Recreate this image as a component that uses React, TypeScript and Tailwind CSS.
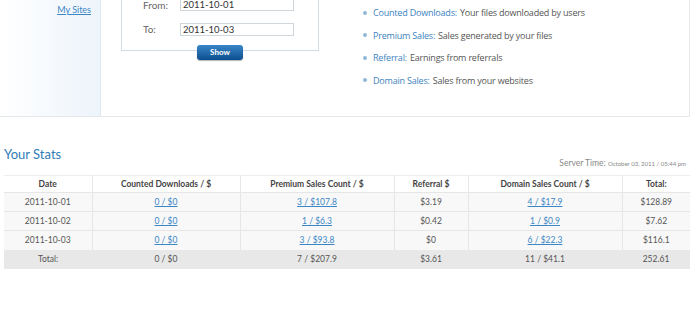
import React from 'react';

interface StatRow {
  date: string;
  downloads: string;
  premium: string;
  referral: string;
  domain: string;
  total: string;
}

const rows: StatRow[] = [
  { date: '2011-10-01', downloads: '0 / $0', premium: '3 / $107.8', referral: '$3.19', domain: '4 / $17.9', total: '$128.89' },
  { date: '2011-10-02', downloads: '0 / $0', premium: '1 / $6.3', referral: '$0.42', domain: '1 / $0.9', total: '$7.62' },
  { date: '2011-10-03', downloads: '0 / $0', premium: '3 / $93.8', referral: '$0', domain: '6 / $22.3', total: '$116.1' },
];

const legend = [
  { label: 'Counted Downloads:', text: 'Your files downloaded by users' },
  { label: 'Premium Sales:', text: 'Sales generated by your files' },
  { label: 'Referral:', text: 'Earnings from referrals' },
  { label: 'Domain Sales:', text: 'Sales from your websites' },
];

const cell = 'border-r border-[#e6e6e6] last:border-r-0 text-center';

export default function App() {
  return (
    <div className="w-[700px] h-[316px] bg-white overflow-hidden font-['Lato',sans-serif] text-[#555]">
      {/* Top panel */}
      <div className="flex w-[690px] h-[117px] border-b border-r border-[#e3e8ed]">
        <div className="w-[101px] shrink-0 border-r border-[#dfe7ef] bg-gradient-to-r from-white to-[#edf4fb] text-right pr-[9px] pt-[4px] text-[9px] leading-[12px]">
          <a href="#" className="text-[#3b87c6] underline">My Sites</a>
        </div>

        <div className="w-[240px] shrink-0 pl-[20px]">
          <div className="w-[198px] h-[51px] border border-t-0 border-[#cfdbe5] text-[10px] text-[#666]">
            <div className="flex items-center h-[11px] pl-[21px]">
              <span className="w-[37px]">From:</span>
              <div className="w-[114px] h-[11px] border border-t-0 border-[#cfd6dc] pl-[2px] leading-[10px] text-[#333] text-[9.5px]">2011-10-01</div>
            </div>
            <div className="flex items-center mt-[11px] pl-[21px]">
              <span className="w-[37px]">To:</span>
              <div className="w-[114px] h-[13px] border border-[#cfd6dc] pl-[2px] leading-[11px] text-[#333] text-[9.5px]">2011-10-03</div>
            </div>
          </div>
          <div className="w-[198px] flex justify-center -mt-[6px]">
            <button className="w-[46px] h-[15px] rounded-[3px] bg-gradient-to-b from-[#3a86c8] to-[#0a4f8f] text-white text-[8px] font-bold leading-[15px] shadow-[0_1px_1px_rgba(0,0,0,0.3)]">
              Show
            </button>
          </div>
        </div>

        <ul className="pl-[22px] pt-[6px] font-['Open_Sans',sans-serif] text-[9px] tracking-[-0.2px] text-[#555] flex flex-col gap-[9.5px]">
          {legend.map((item) => (
            <li key={item.label} className="flex items-center leading-[13px]">
              <span className="w-[4px] h-[4px] rounded-full bg-[#8fb8d8] mr-[6px]" />
              <span className="text-[#3d83c0]">{item.label}</span>
              <span className="ml-[3px]">{item.text}</span>
            </li>
          ))}
        </ul>
      </div>

      {/* Stats */}
      <div className="w-[690px] pl-[4px] mt-[29px]">
        <div className="flex items-end justify-between w-[686px]">
          <h2 className="text-[13px] text-[#2f7cb5] leading-[16px] mb-[5px]">Your Stats</h2>
          <p className="whitespace-nowrap text-[8.5px] leading-[10px] text-[#888] -mb-[2px] mr-[4px]">
            Server Time: <span className="text-[6px]">October 03, 2011 / 05:44 pm</span>
          </p>
        </div>

        <table className="w-[686px] mt-[8px] border-collapse text-[8.5px] table-fixed">
          <colgroup>
            <col className="w-[88px]" />
            <col className="w-[148px]" />
            <col className="w-[154px]" />
            <col className="w-[74px]" />
            <col className="w-[154px]" />
            <col className="w-[68px]" />
          </colgroup>
          <thead>
            <tr className="h-[17px] border-t border-[#eeeeee] text-[#444] font-bold">
              <th className={cell}>Date</th>
              <th className={cell}>Counted Downloads / $</th>
              <th className={cell}>Premium Sales Count / $</th>
              <th className={cell}>Referral $</th>
              <th className={cell}>Domain Sales Count / $</th>
              <th className={cell}>Total:</th>
            </tr>
          </thead>
          <tbody>
            {rows.map((r) => (
              <tr key={r.date} className="h-[19px] border-t border-[#e6e6e6] bg-[#f8f8f8]">
                <td className={cell}>{r.date}</td>
                <td className={cell}><a href="#" className="text-[#3b87c6] underline">{r.downloads}</a></td>
                <td className={cell}><a href="#" className="text-[#3b87c6] underline">{r.premium}</a></td>
                <td className={cell}>{r.referral}</td>
                <td className={cell}><a href="#" className="text-[#3b87c6] underline">{r.domain}</a></td>
                <td className={cell}>{r.total}</td>
              </tr>
            ))}
            <tr className="h-[19px] bg-[#e8e8e8]">
              <td className="text-center">Total:</td>
              <td className="text-center">0 / $0</td>
              <td className="text-center">7 / $207.9</td>
              <td className="text-center">$3.61</td>
              <td className="text-center">11 / $41.1</td>
              <td className="text-center">252.61</td>
            </tr>
          </tbody>
        </table>
      </div>
    </div>
  );
}
